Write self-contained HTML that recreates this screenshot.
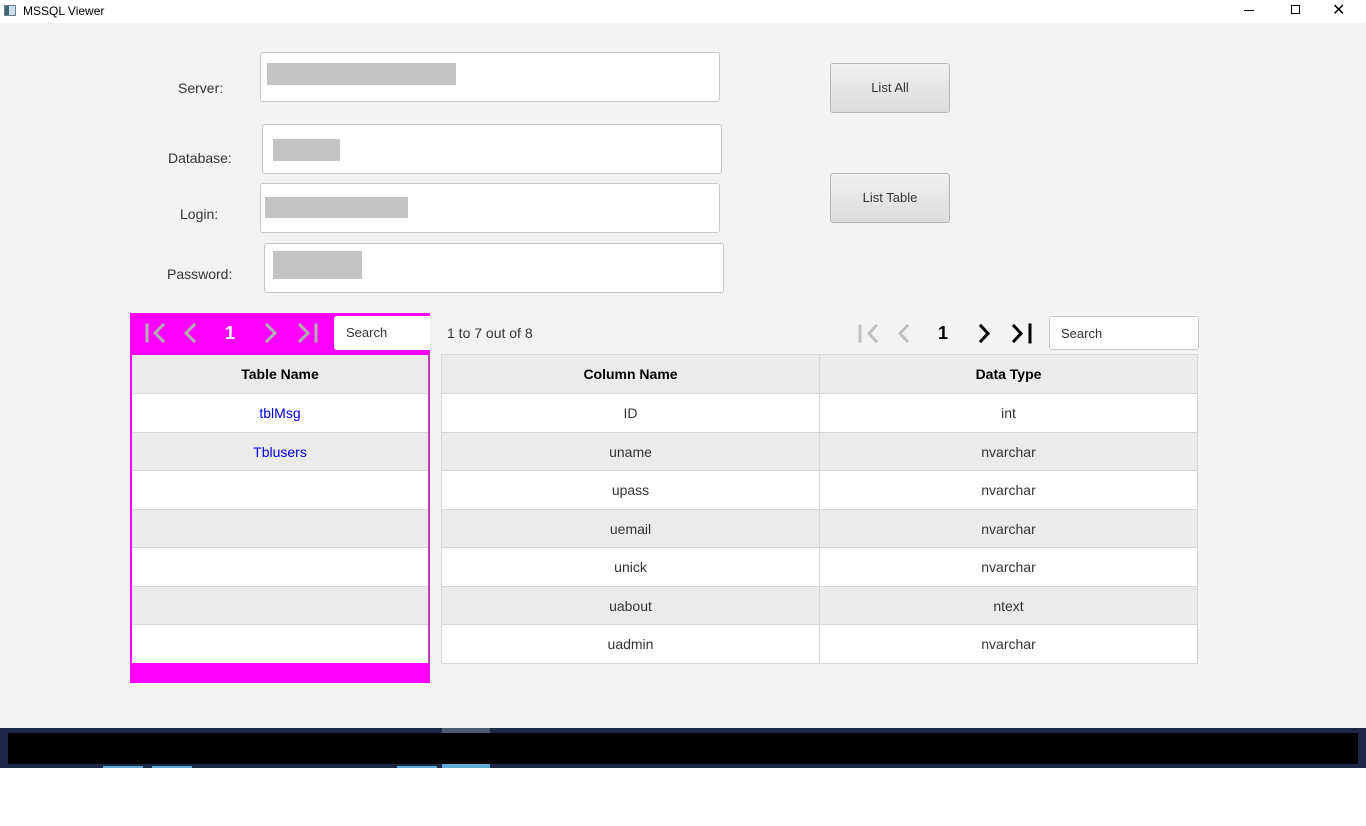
<!DOCTYPE html>
<html><head><style>
*{margin:0;padding:0;box-sizing:border-box}
body{width:1366px;height:826px;background:#fff;font-family:"Liberation Sans",sans-serif;font-size:14px;color:#333;position:relative;overflow:hidden}
.a{position:absolute}
.app{left:0;top:23px;width:1366px;height:705px;background:#f3f3f3}
.lbl{font-size:14px;color:#333}
.inp{background:#fff;border:1px solid #c8c8c8;border-radius:3px}
.blk{background:#c3c3c3}
.btn{background:linear-gradient(#f0f0f0,#dcdcdc);border:1px solid #b5b5b5;border-radius:3px;text-align:center;line-height:48px;font-size:13px;color:#333}
.row{position:absolute;left:0;right:0;border-bottom:1px solid #d6d6d6;text-align:center;line-height:38px}
.hd{background:#ebebeb;font-weight:bold;color:#000}
.g{background:#ebebeb}
.w{background:#fff}
</style></head><body>
<div class="a" style="left:0;top:0;width:1366px;height:23px;background:#fff"></div>
<div class="a" style="left:4px;top:5px;width:12px;height:11px;border:1px solid #6a7f8a;background:linear-gradient(90deg,#3f6a6a 0 40%,#cde 40%)"></div>
<div class="a" style="left:23px;top:4px;font-size:12px;color:#000">MSSQL Viewer</div>
<div class="a" style="left:1244px;top:10px;width:10px;height:1px;background:#000"></div>
<div class="a" style="left:1291px;top:5px;width:9px;height:9px;border:1px solid #000"></div>
<div class="a" style="left:1332px;top:0;font-size:16px;color:#000">✕</div>
<div class="a app"></div>

<div class="a lbl" style="left:178px;top:80px">Server:</div>
<div class="a inp" style="left:260px;top:52px;width:460px;height:50px"></div>
<div class="a blk" style="left:267px;top:63px;width:189px;height:22px"></div>
<div class="a lbl" style="left:168px;top:150px">Database:</div>
<div class="a inp" style="left:262px;top:124px;width:460px;height:50px"></div>
<div class="a blk" style="left:273px;top:139px;width:67px;height:22px"></div>
<div class="a lbl" style="left:180px;top:206px">Login:</div>
<div class="a inp" style="left:260px;top:183px;width:460px;height:50px"></div>
<div class="a blk" style="left:265px;top:197px;width:143px;height:21px"></div>
<div class="a lbl" style="left:167px;top:266px">Password:</div>
<div class="a inp" style="left:264px;top:243px;width:460px;height:50px"></div>
<div class="a blk" style="left:273px;top:251px;width:89px;height:28px"></div>
<div class="a btn" style="left:830px;top:63px;width:120px;height:50px">List All</div>
<div class="a btn" style="left:830px;top:173px;width:120px;height:50px">List Table</div>

<!-- left table -->
<div class="a" style="left:130px;top:313px;width:300px;height:370px;background:#ff00ff"></div>
<svg class="a" style="left:130px;top:313px" width="200" height="40" fill="none" stroke-width="3" stroke-linecap="square">
<g stroke="#b0b0b0">
<line x1="17" y1="12" x2="17" y2="28"/><polyline points="33,12 25,20 33,28"/>
<polyline points="64,12 56,20 64,28"/>
<polyline points="137,12 145,20 137,28"/>
<polyline points="170,12 178,20 170,28"/><line x1="186" y1="12" x2="186" y2="28"/>
</g></svg>
<div class="a" style="left:225px;top:323px;font-size:18px;color:#fff;font-weight:bold">1</div>
<div class="a" style="left:334px;top:316px;width:96px;height:34px;background:#fff;border-radius:3px 0 0 3px;padding:9px 12px;font-size:13px">Search</div>
<div class="a" style="left:132px;top:355px;width:297px;height:308px;background:#fff;border-right:1px solid #777">
<div class="row hd" style="top:0;height:39px">Table Name</div>
<div class="row w" style="top:39px;height:39px;color:#0000ee">tblMsg</div>
<div class="row g" style="top:78px;height:38px;color:#0000ee">Tblusers</div>
<div class="row w" style="top:116px;height:39px"></div>
<div class="row g" style="top:155px;height:38px"></div>
<div class="row w" style="top:193px;height:39px"></div>
<div class="row g" style="top:232px;height:38px"></div>
<div class="row w" style="top:270px;height:38px;border:none"></div>
</div>

<!-- right -->
<div class="a" style="left:447px;top:325px;font-size:14px">1 to 7 out of 8</div>
<svg class="a" style="left:850px;top:313px" width="190" height="40" fill="none" stroke-width="3" stroke-linecap="square">
<g stroke="#c0c0c0">
<line x1="10" y1="13" x2="10" y2="28"/><polyline points="26,13 19,20.5 26,28"/>
<polyline points="57,13 50,20.5 57,28"/></g>
<g stroke="#000">
<polyline points="131,13 138,20.5 131,28"/>
<polyline points="164,13 171,20.5 164,28"/><line x1="180" y1="12" x2="180" y2="29"/></g></svg>
<div class="a" style="left:938px;top:323px;font-size:18px;color:#000;font-weight:bold">1</div>
<div class="a inp" style="left:1049px;top:316px;width:150px;height:34px;padding:9px 11px;font-size:13px">Search</div>
<div class="a" style="left:441px;top:354px;width:757px;height:310px;border:1px solid #d6d6d6;background:#fff">
<div class="a" style="left:0;top:0;width:378px;height:308px;border-right:1px solid #d6d6d6">
<div class="row hd" style="top:0;height:39px">Column Name</div>
<div class="row w" style="top:39px;height:39px">ID</div>
<div class="row g" style="top:78px;height:38px">uname</div>
<div class="row w" style="top:116px;height:39px">upass</div>
<div class="row g" style="top:155px;height:38px">uemail</div>
<div class="row w" style="top:193px;height:39px">unick</div>
<div class="row g" style="top:232px;height:38px">uabout</div>
<div class="row w" style="top:270px;height:38px;border:none">uadmin</div>
</div>
<div class="a" style="left:378px;top:0;width:377px;height:308px">
<div class="row hd" style="top:0;height:39px">Data Type</div>
<div class="row w" style="top:39px;height:39px">int</div>
<div class="row g" style="top:78px;height:38px">nvarchar</div>
<div class="row w" style="top:116px;height:39px">nvarchar</div>
<div class="row g" style="top:155px;height:38px">nvarchar</div>
<div class="row w" style="top:193px;height:39px">nvarchar</div>
<div class="row g" style="top:232px;height:38px">ntext</div>
<div class="row w" style="top:270px;height:38px;border:none">nvarchar</div>
</div>
</div>

<!-- taskbar -->
<div class="a" style="left:0;top:728px;width:1366px;height:40px;background:#1c2748"></div>
<div class="a" style="left:8px;top:733px;width:1350px;height:31px;background:#000"></div>
<div class="a" style="left:442px;top:728px;width:48px;height:5px;background:#4e5a74"></div>
<div class="a" style="left:103px;top:766px;width:40px;height:2px;background:#5ea9d6"></div>
<div class="a" style="left:152px;top:766px;width:40px;height:2px;background:#5ea9d6"></div>
<div class="a" style="left:397px;top:766px;width:40px;height:2px;background:#5ea9d6"></div>
<div class="a" style="left:442px;top:764px;width:48px;height:4px;background:#5ea9d6"></div>
</body></html>
